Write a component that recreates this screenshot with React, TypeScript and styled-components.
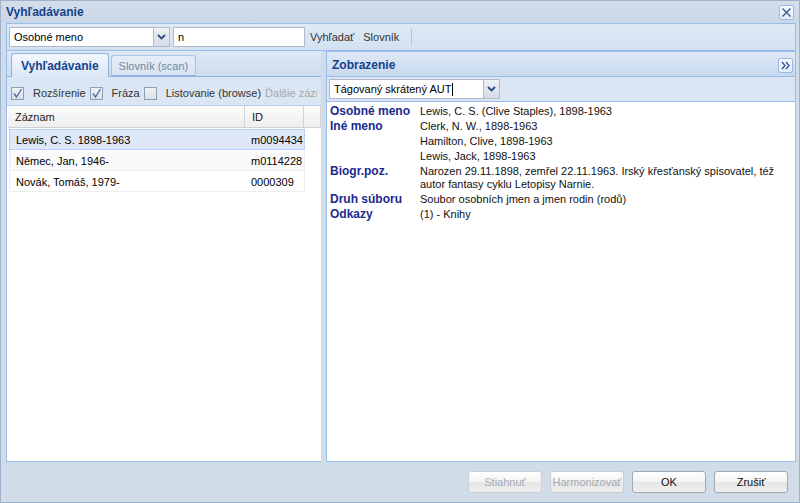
import React from 'react';
import styled, { createGlobalStyle } from 'styled-components';

const Global = createGlobalStyle`
  html, body { margin: 0; padding: 0; }
  body { font-family: "Liberation Sans", Arial, sans-serif; font-size: 11px; color: #000; background: #fff; }
  * { box-sizing: border-box; }
`;

const Win = styled.div`
  width: 800px;
  height: 503px;
  border: 1px solid #9fb2cc;
  background: #d1dce9;
  display: flex;
  flex-direction: column;
  overflow: hidden;
`;

const TitleBar = styled.div`
  height: 22px;
  flex: none;
  display: flex;
  align-items: center;
  justify-content: space-between;
  padding: 0 5px 0 5px;
  background: linear-gradient(#d3deeb, #cbd7e6);
  color: #15428b;
  font-weight: bold;
  font-size: 12px;
`;

const ToolBtn = styled.div`
  width: 15px;
  height: 15px;
  border: 1px solid #99bbe8;
  border-radius: 2px;
  background: linear-gradient(#f7faff, #e1ebf8);
  display: flex;
  align-items: center;
  justify-content: center;
`;

const Body = styled.div`
  flex: 1;
  display: flex;
  flex-direction: column;
  padding: 0 3px 0 5px;
  min-height: 0;
`;

const TopBar = styled.div`
  height: 28px;
  flex: none;
  border: 1px solid #99bbe8;
  background: linear-gradient(#dfe9f6, #d3e1f1);
  display: flex;
  align-items: center;
  padding: 0 2px;
  gap: 3px;
`;

const Combo = styled.div<{ $w: number }>`
  width: ${p => p.$w}px;
  height: 20px;
  display: flex;
  flex: none;
`;

const ComboInput = styled.div`
  flex: 1;
  border: 1px solid #b5b8c8;
  border-right: none;
  background: #fff;
  display: flex;
  align-items: center;
  padding: 0 4px;
  font-size: 11px;
  white-space: nowrap;
  overflow: hidden;
`;

const Trigger = styled.div`
  width: 17px;
  flex: none;
  border: 1px solid #b5b8c8;
  background: linear-gradient(#eef1f5, #d5dce6);
  display: flex;
  align-items: center;
  justify-content: center;
`;

const TextInput = styled.div<{ $w: number }>`
  width: ${p => p.$w}px;
  height: 20px;
  border: 1px solid #b5b8c8;
  background: #fff;
  display: flex;
  align-items: center;
  padding: 0 4px;
`;

const BarText = styled.span<{ $ml?: number }>`
  margin-left: ${p => p.$ml ?? 0}px;
  color: #333;
  white-space: nowrap;
`;

const Sep = styled.div`
  width: 1px;
  height: 16px;
  background: #a8c4ea;
  margin-left: 9px;
`;

const Caret = styled.span`
  display: inline-block;
  width: 1px;
  height: 13px;
  background: #000;
  margin-left: 1px;
`;

const Main = styled.div`
  flex: 1;
  display: flex;
  min-height: 0;
`;

const LeftPanel = styled.div`
  width: 315px;
  flex: none;
  display: flex;
  flex-direction: column;
  border-left: 1px solid #99bbe8;
  border-bottom: 1px solid #99bbe8;
  background: #fff;
`;

const TabStrip = styled.div`
  height: 26px;
  flex: none;
  display: flex;
  align-items: flex-end;
  gap: 2px;
  padding-left: 4px;
  background: linear-gradient(#dde8f6, #cddcef);
  border-bottom: 1px solid #8db2e3;
`;

const Tab = styled.div<{ $active?: boolean }>`
  height: ${p => (p.$active ? 24 : 21)}px;
  margin-bottom: ${p => (p.$active ? -1 : 0)}px;
  padding: 0 ${p => (p.$active ? 9 : 7)}px;
  display: flex;
  align-items: center;
  border: 1px solid ${p => (p.$active ? '#8db2e3' : '#a9c3e4')};
  border-bottom: ${p => (p.$active ? 'none' : '1px solid #8db2e3')};
  border-radius: 3px 3px 0 0;
  background: ${p => (p.$active ? 'linear-gradient(#f3f7fd, #dbe7f6)' : 'linear-gradient(#e6edf6, #d9e3ef)')};
  color: ${p => (p.$active ? '#15428b' : '#7088ab')};
  font-weight: ${p => (p.$active ? 'bold' : 'normal')};
  font-size: ${p => (p.$active ? 12 : 11)}px;
  white-space: nowrap;
`;

const CheckBar = styled.div`
  height: 29px;
  flex: none;
  display: flex;
  align-items: center;
  padding: 4px 4px 0;
  background: #dbe6f4;
  border-bottom: 1px solid #b8cdea;
  overflow: hidden;
  white-space: nowrap;
`;

const CbLabel = styled.span<{ $muted?: boolean }>`
  color: ${p => (p.$muted ? '#a6a6a6' : '#333')};
  margin: 0 4px 0 ${p => (p.$muted ? 0 : 9)}px;
  ${p => (p.$muted ? 'flex: 1; min-width: 0; overflow: hidden; margin-right: 0;' : '')}
`;

const Box = styled.span`
  width: 13px;
  height: 13px;
  flex: none;
  border: 1px solid #8f9fb3;
  background: linear-gradient(#f0f2f5, #dadfe6);
  display: inline-flex;
  align-items: center;
  justify-content: center;
`;

const Grid = styled.div`
  flex: 1;
  padding: 0 0 0 1px;
  background: #fff;
`;

const GridHead = styled.div`
  display: grid;
  grid-template-columns: 237px 59px 1fr;
  height: 22px;
  background: linear-gradient(#fbfbfb, #eeeeee);
  border-bottom: 1px solid #d0d0d0;
`;

const HeadCell = styled.div`
  display: flex;
  align-items: center;
  padding-left: 7px;
  border-right: 1px solid #d4d4d4;
  color: #222;
`;

const Row = styled.div<{ $sel?: boolean; $alt?: boolean }>`
  display: grid;
  grid-template-columns: 236px 59px;
  width: 296px;
  height: 21px;
  margin: 1px 0 0 1px;
  align-items: center;
  background: ${p => (p.$sel ? '#dfe8f6' : p.$alt ? '#fafafa' : '#fff')};
  border: 1px ${p => (p.$sel ? 'dotted #a3bae9' : 'solid #ededed')};
  border-top-color: ${p => (p.$sel ? '#a3bae9' : '#fff')};
  & + & { margin-top: 0; }
`;

const Cell = styled.div<{ $pl?: number }>`
  padding-left: ${p => p.$pl ?? 6}px;
  white-space: nowrap;
  color: #000;
`;

const Splitter = styled.div`
  width: 5px;
  flex: none;
  background: #d1dce9;
`;

const RightPanel = styled.div`
  flex: 1;
  display: flex;
  flex-direction: column;
  border: 1px solid #99bbe8;
  background: #fff;
  min-width: 0;
`;

const PanelHead = styled.div`
  height: 25px;
  flex: none;
  display: flex;
  align-items: center;
  justify-content: space-between;
  padding: 2px 2px 0 5px;
  background: linear-gradient(#dfe9f6, #c8d9ef);
  border-bottom: 1px solid #99bbe8;
  color: #15428b;
  font-weight: bold;
  font-size: 12px;
`;

const PanelBar = styled.div`
  height: 25px;
  flex: none;
  display: flex;
  align-items: center;
  padding: 0 2px;
  background: #dbe6f4;
  border-bottom: 1px solid #99bbe8;
`;

const Detail = styled.div`
  flex: 1;
  padding: 2px 14px 0 3px;
  display: grid;
  grid-template-columns: 90px 1fr;
  align-content: start;
  line-height: 13px;
`;

const Label = styled.div`
  padding: 1px 0;
  font-weight: bold;
  font-size: 12px;
  color: #1a2a8e;
`;

const Value = styled.div`
  padding: 1px 0;
  color: #111;
`;

const Footer = styled.div`
  height: 40px;
  flex: none;
  display: flex;
  align-items: center;
  justify-content: flex-end;
  gap: 8px;
  padding: 0 11px 1px 0;
`;

const Button = styled.div<{ $disabled?: boolean }>`
  width: 74px;
  height: 22px;
  border: 1px solid ${p => (p.$disabled ? '#c9ced6' : '#a3a8b0')};
  border-radius: 3px;
  background: linear-gradient(#ffffff 0%, #f3f3f3 50%, #e6e6e6 51%, #eeeeee 100%);
  display: flex;
  align-items: center;
  justify-content: center;
  color: ${p => (p.$disabled ? '#a4a9b0' : '#111')};
  font-size: 11px;
`;

const Chevron = () => (
  <svg width="9" height="6" viewBox="0 0 9 6">
    <path d="M1 1 L4.5 4.5 L8 1" fill="none" stroke="#2b4a80" strokeWidth="1.8" />
  </svg>
);

const Check = () => (
  <svg width="11" height="11" viewBox="0 0 11 11">
    <path d="M2 5.5 L4.5 9 L9.5 1" fill="none" stroke="#4d6fae" strokeWidth="1.4" />
  </svg>
);

const CheckBox = ({ on }: { on?: boolean }) => <Box>{on ? <Check /> : null}</Box>;

const rows = [
  { name: 'Lewis, C. S. 1898-1963', id: 'm0094434', sel: true },
  { name: 'Němec, Jan, 1946-', id: 'm0114228', alt: true },
  { name: 'Novák, Tomáš, 1979-', id: '0000309' },
];

const details: [string, string][] = [
  ['Osobné meno', 'Lewis, C. S. (Clive Staples), 1898-1963'],
  ['Iné meno', 'Clerk, N. W., 1898-1963'],
  ['', 'Hamilton, Clive, 1898-1963'],
  ['', 'Lewis, Jack, 1898-1963'],
  ['Biogr.poz.', 'Narozen 29.11.1898, zemřel 22.11.1963. Irský křesťanský spisovatel, též autor fantasy cyklu Letopisy Narnie.'],
  ['Druh súboru', 'Soubor osobních jmen a jmen rodin (rodů)'],
  ['Odkazy', '(1) - Knihy'],
];

export default function App() {
  return (
    <>
      <Global />
      <Win>
        <TitleBar>
          <span>Vyhľadávanie</span>
          <ToolBtn>
            <svg width="11" height="11" viewBox="0 0 11 11">
              <path d="M1.5 1.5 L9.5 9.5 M9.5 1.5 L1.5 9.5" stroke="#3a5a94" strokeWidth="1.4" />
            </svg>
          </ToolBtn>
        </TitleBar>
        <Body>
          <TopBar>
            <Combo $w={161}>
              <ComboInput>Osobné meno</ComboInput>
              <Trigger><Chevron /></Trigger>
            </Combo>
            <TextInput $w={132}>n</TextInput>
            <BarText $ml={2}>Vyhľadať</BarText>
            <BarText $ml={6}>Slovník</BarText>
            <Sep />
          </TopBar>
          <Main>
            <LeftPanel>
              <TabStrip>
                <Tab $active>Vyhľadávanie</Tab>
                <Tab>Slovník (scan)</Tab>
              </TabStrip>
              <CheckBar>
                <CheckBox on />
                <CbLabel>Rozšírenie</CbLabel>
                <CheckBox on />
                <CbLabel>Fráza</CbLabel>
                <CheckBox />
                <CbLabel>Listovanie (browse)</CbLabel>
                <CbLabel $muted>Ďalšie záznamy</CbLabel>
              </CheckBar>
              <Grid>
                <GridHead>
                  <HeadCell>Záznam</HeadCell>
                  <HeadCell>ID</HeadCell>
                  <HeadCell />
                </GridHead>
                {rows.map(r => (
                  <Row key={r.id} $sel={r.sel} $alt={r.alt}>
                    <Cell>{r.name}</Cell>
                    <Cell $pl={5}>{r.id}</Cell>
                  </Row>
                ))}
              </Grid>
            </LeftPanel>
            <Splitter />
            <RightPanel>
              <PanelHead>
                <span>Zobrazenie</span>
                <ToolBtn>
                  <svg width="11" height="11" viewBox="0 0 11 11">
                    <path d="M2 2 L5 5.5 L2 9 M6 2 L9 5.5 L6 9" fill="none" stroke="#3a5a94" strokeWidth="1.4" />
                  </svg>
                </ToolBtn>
              </PanelHead>
              <PanelBar>
                <Combo $w={171}>
                  <ComboInput>Tágovaný skrátený AUT<Caret /></ComboInput>
                  <Trigger><Chevron /></Trigger>
                </Combo>
              </PanelBar>
              <Detail>
                {details.map(([l, v], i) => (
                  <React.Fragment key={i}>
                    <Label>{l}</Label>
                    <Value>{v}</Value>
                  </React.Fragment>
                ))}
              </Detail>
            </RightPanel>
          </Main>
        </Body>
        <Footer>
          <Button $disabled>Stiahnuť</Button>
          <Button $disabled>Harmonizovať</Button>
          <Button>OK</Button>
          <Button>Zrušiť</Button>
        </Footer>
      </Win>
    </>
  );
}
